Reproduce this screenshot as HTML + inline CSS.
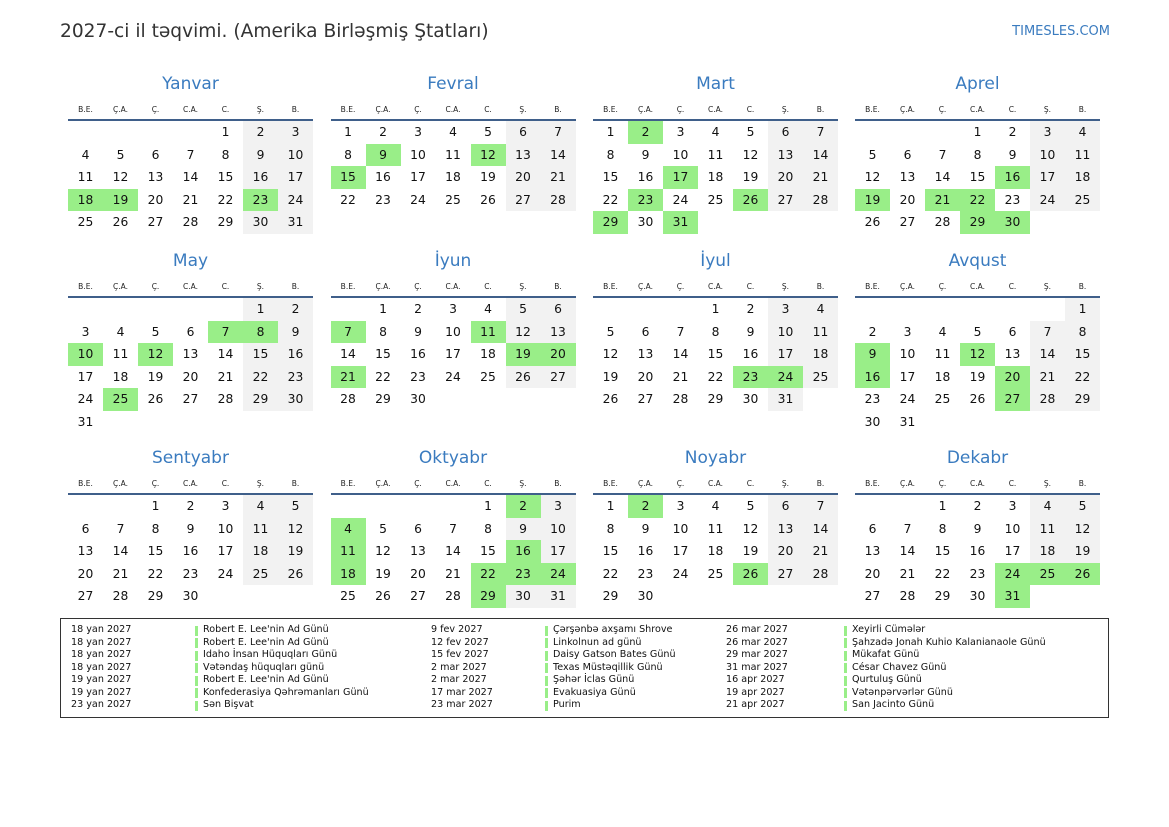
<!DOCTYPE html>
<html><head><meta charset="utf-8">
<style>
body{margin:0;width:1169px;height:827px;background:#fff;position:relative;overflow:hidden;font-family:"DejaVu Sans","Liberation Sans",sans-serif;color:#111}
.a{position:absolute}
.t{left:60px;top:21px;font-size:18.6px;color:#333;white-space:nowrap}
.logo{right:59px;top:24px;font-size:13px;color:#3a7bbf}
.mn{font-size:17px;color:#3a7bbf;text-align:center;width:245px}
.wd{font-size:7.5px;color:#222;text-align:center;width:35px}
.ln{height:2px;background:#3f5f8a;width:245px}
.c{width:35px;height:22.5px;line-height:22.5px;text-align:center;font-size:12.3px}
.g{background:#f2f2f2}
.h{background:#99ee88}
.box{left:60px;top:618px;width:1047px;height:98px;border:1.5px solid #333}
.lg{font-size:9.6px;white-space:nowrap;color:#111;line-height:12.5px}
.bar{width:3px;height:10px;background:#99ee88}
</style></head><body>
<div class="a t">2027-ci il təqvimi. (Amerika Birləşmiş Ştatları)</div>
<div class="a logo">TIMESLES.COM</div>
<div class="a box"></div>
<div id="root"></div>
<script>
var names=["Yanvar","Fevral","Mart","Aprel","May","İyun","İyul","Avqust","Sentyabr","Oktyabr","Noyabr","Dekabr"];
var wd=["B.E.","Ç.A.","Ç.","C.A.","C.","Ş.","B."];
var hol=[[18,19,23],[9,12,15],[2,17,23,26,29,31],[16,19,21,22,29,30],[7,8,10,12,25],[7,11,19,20,21],[23,24],[9,12,16,20,27],[],[2,4,11,16,18,22,23,24,29],[2,26],[24,25,26,31]];
var xs=[68,330.5,593,855],ys=[85,262,459];
var h="";
for(var m=0;m<12;m++){
 var x0=xs[m%4],yb=ys[Math.floor(m/4)];
 h+='<div class="a mn" style="left:'+x0+'px;top:'+(yb-11)+'px">'+names[m]+'</div>';
 for(var i=0;i<7;i++)h+='<div class="a wd" style="left:'+(x0+i*35)+'px;top:'+(yb+20)+'px">'+wd[i]+'</div>';
 var ly=yb+34;
 h+='<div class="a ln" style="left:'+x0+'px;top:'+ly+'px"></div>';
 var first=(new Date(2027,m,1).getDay()+6)%7,dim=new Date(2027,m+1,0).getDate();
 var rows=Math.ceil((first+dim)/7);
 for(var r=0;r<rows;r++)for(var c=0;c<7;c++){
  var d=r*7+c-first+1,txt=(d>=1&&d<=dim)?d:"";
  var cls="c";
  if(txt&&hol[m].indexOf(d)>=0)cls+=" h";else if(c>=5&&(txt||r>0))cls+=" g";
  if(c>=5&&!txt&&r==rows-1)cls="c";
  h+='<div class="a '+cls+'" style="left:'+(x0+c*35)+'px;top:'+(ly+2+r*22.5)+'px">'+txt+'</div>';
 }
}
var L=[
[71,195,203,[["18 yan 2027","Robert E. Lee'nin Ad Günü"],["18 yan 2027","Robert E. Lee'nin Ad Günü"],["18 yan 2027","Idaho İnsan Hüquqları Günü"],["18 yan 2027","Vətəndaş hüquqları günü"],["19 yan 2027","Robert E. Lee'nin Ad Günü"],["19 yan 2027","Konfederasiya Qəhrəmanları Günü"],["23 yan 2027","Sən Bişvat"]]],
[431,545,553,[["9 fev 2027","Çərşənbə axşamı Shrove"],["12 fev 2027","Linkolnun ad günü"],["15 fev 2027","Daisy Gatson Bates Günü"],["2 mar 2027","Texas Müstəqillik Günü"],["2 mar 2027","Şəhər İclas Günü"],["17 mar 2027","Evakuasiya Günü"],["23 mar 2027","Purim"]]],
[726,844,852,[["26 mar 2027","Xeyirli Cümələr"],["26 mar 2027","Şahzadə Jonah Kuhio Kalanianaole Günü"],["29 mar 2027","Mükafat Günü"],["31 mar 2027","César Chavez Günü"],["16 apr 2027","Qurtuluş Günü"],["19 apr 2027","Vətənpərvərlər Günü"],["21 apr 2027","San Jacinto Günü"]]]];
L.forEach(function(col){col[3].forEach(function(e,i){var y=624+i*12.5;
 h+='<div class="a lg" style="left:'+col[0]+'px;top:'+y+'px">'+e[0]+'</div>';
 h+='<div class="a bar" style="left:'+col[1]+'px;top:'+(y+1.5)+'px"></div>';
 h+='<div class="a lg" style="left:'+col[2]+'px;top:'+y+'px">'+e[1]+'</div>';});});
document.getElementById("root").innerHTML=h;
</script>
</body></html>
